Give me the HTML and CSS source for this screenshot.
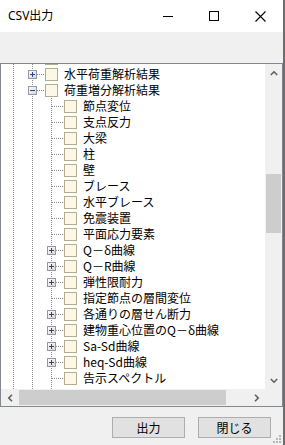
FILE: index.html
```html
<!DOCTYPE html>
<html lang="ja">
<head>
<meta charset="utf-8">
<title>CSV出力</title>
<link rel="stylesheet" href="styles.css">
</head>
<body>
<svg class="defs" width="0" height="0" aria-hidden="true">
  <defs>
    <linearGradient id="bx" x1="0" y1="0" x2="1" y2="1">
      <stop offset="0" stop-color="#ffffff"/>
      <stop offset="1" stop-color="#d4d4d4"/>
    </linearGradient>
    <symbol id="vl" viewBox="0 0 19 16"><path d="M9.5 0V16" stroke="#8c8c8c" stroke-dasharray="1 1"/></symbol>
    <symbol id="tee" viewBox="0 0 22 16"><path d="M9.5 0V16M10 8.5H22" stroke="#8c8c8c" stroke-dasharray="1 1"/></symbol>
    <symbol id="plus" viewBox="0 0 22 16"><path d="M9.5 0V16M10 8.5H22" stroke="#8c8c8c" stroke-dasharray="1 1"/><rect x="5.5" y="4.5" width="8" height="8" fill="url(#bx)" stroke="#8f9aa6"/><path d="M7 8.5H12M9.5 6V11" stroke="#24479a"/></symbol>
    <symbol id="minus" viewBox="0 0 22 16"><path d="M9.5 0V16M10 8.5H22" stroke="#8c8c8c" stroke-dasharray="1 1"/><rect x="5.5" y="4.5" width="8" height="8" fill="url(#bx)" stroke="#8f9aa6"/><path d="M7 8.5H12" stroke="#24479a"/></symbol>
  </defs>
</svg>
<div class="window">
  <div class="titlebar">
    <span class="title">CSV出力</span>
    <span class="cap"><svg width="10" height="10"><path d="M0 5.5H10" stroke="#000"/></svg></span>
    <span class="cap"><svg width="10" height="10"><rect x="0.5" y="0.5" width="9" height="9" fill="none" stroke="#000"/></svg></span>
    <span class="cap"><svg width="11" height="11"><path d="M0.5 0.5L10.5 10.5M10.5 0.5L0.5 10.5" stroke="#000" stroke-width="1.1"/></svg></span>
  </div>
  <div class="main">
    <div class="treebox">
      <div class="tree">
        <div class="tree-inner">
          <div class="row"><svg class="c19"><use href="#vl"/></svg><svg class="c22"><use href="#tee"/></svg><span class="chk"></span><span class="txt"></span></div>
          <div class="row"><svg class="c19"><use href="#vl"/></svg><svg class="c22"><use href="#plus"/></svg><span class="chk"></span><span class="txt">水平荷重解析結果</span></div>
          <div class="row"><svg class="c19"><use href="#vl"/></svg><svg class="c22"><use href="#minus"/></svg><span class="chk"></span><span class="txt">荷重増分解析結果</span></div>
          <div class="row"><svg class="c19"><use href="#vl"/></svg><svg class="c19"><use href="#vl"/></svg><svg class="c22"><use href="#tee"/></svg><span class="chk"></span><span class="txt">節点変位</span></div>
          <div class="row"><svg class="c19"><use href="#vl"/></svg><svg class="c19"><use href="#vl"/></svg><svg class="c22"><use href="#tee"/></svg><span class="chk"></span><span class="txt">支点反力</span></div>
          <div class="row"><svg class="c19"><use href="#vl"/></svg><svg class="c19"><use href="#vl"/></svg><svg class="c22"><use href="#tee"/></svg><span class="chk"></span><span class="txt">大梁</span></div>
          <div class="row"><svg class="c19"><use href="#vl"/></svg><svg class="c19"><use href="#vl"/></svg><svg class="c22"><use href="#tee"/></svg><span class="chk"></span><span class="txt">柱</span></div>
          <div class="row"><svg class="c19"><use href="#vl"/></svg><svg class="c19"><use href="#vl"/></svg><svg class="c22"><use href="#tee"/></svg><span class="chk"></span><span class="txt">壁</span></div>
          <div class="row"><svg class="c19"><use href="#vl"/></svg><svg class="c19"><use href="#vl"/></svg><svg class="c22"><use href="#tee"/></svg><span class="chk"></span><span class="txt">ブレース</span></div>
          <div class="row"><svg class="c19"><use href="#vl"/></svg><svg class="c19"><use href="#vl"/></svg><svg class="c22"><use href="#tee"/></svg><span class="chk"></span><span class="txt">水平ブレース</span></div>
          <div class="row"><svg class="c19"><use href="#vl"/></svg><svg class="c19"><use href="#vl"/></svg><svg class="c22"><use href="#tee"/></svg><span class="chk"></span><span class="txt">免震装置</span></div>
          <div class="row"><svg class="c19"><use href="#vl"/></svg><svg class="c19"><use href="#vl"/></svg><svg class="c22"><use href="#tee"/></svg><span class="chk"></span><span class="txt">平面応力要素</span></div>
          <div class="row"><svg class="c19"><use href="#vl"/></svg><svg class="c19"><use href="#vl"/></svg><svg class="c22"><use href="#plus"/></svg><span class="chk"></span><span class="txt">Q－δ曲線</span></div>
          <div class="row"><svg class="c19"><use href="#vl"/></svg><svg class="c19"><use href="#vl"/></svg><svg class="c22"><use href="#plus"/></svg><span class="chk"></span><span class="txt">Q－R曲線</span></div>
          <div class="row"><svg class="c19"><use href="#vl"/></svg><svg class="c19"><use href="#vl"/></svg><svg class="c22"><use href="#plus"/></svg><span class="chk"></span><span class="txt">弾性限耐力</span></div>
          <div class="row"><svg class="c19"><use href="#vl"/></svg><svg class="c19"><use href="#vl"/></svg><svg class="c22"><use href="#tee"/></svg><span class="chk"></span><span class="txt">指定節点の層間変位</span></div>
          <div class="row"><svg class="c19"><use href="#vl"/></svg><svg class="c19"><use href="#vl"/></svg><svg class="c22"><use href="#plus"/></svg><span class="chk"></span><span class="txt">各通りの層せん断力</span></div>
          <div class="row"><svg class="c19"><use href="#vl"/></svg><svg class="c19"><use href="#vl"/></svg><svg class="c22"><use href="#plus"/></svg><span class="chk"></span><span class="txt">建物重心位置のQ－δ曲線</span></div>
          <div class="row"><svg class="c19"><use href="#vl"/></svg><svg class="c19"><use href="#vl"/></svg><svg class="c22"><use href="#plus"/></svg><span class="chk"></span><span class="txt">Sa-Sd曲線</span></div>
          <div class="row"><svg class="c19"><use href="#vl"/></svg><svg class="c19"><use href="#vl"/></svg><svg class="c22"><use href="#plus"/></svg><span class="chk"></span><span class="txt">heq-Sd曲線</span></div>
          <div class="row"><svg class="c19"><use href="#vl"/></svg><svg class="c19"><use href="#vl"/></svg><svg class="c22"><use href="#tee"/></svg><span class="chk"></span><span class="txt">告示スペクトル</span></div>
          <div class="row"><svg class="c19"><use href="#vl"/></svg><svg class="c19"><use href="#vl"/></svg><svg class="c22"><use href="#tee"/></svg></div>
        </div>
      </div>
      <div class="vscroll">
        <span class="sbtn"><svg width="8" height="6"><path d="M0.8 5L4 1.8L7.2 5" fill="none" stroke="#606060" stroke-width="1.6"/></svg></span>
        <span class="vtrack"><span class="vthumb"></span></span>
        <span class="sbtn"><svg width="8" height="6"><path d="M0.8 1L4 4.2L7.2 1" fill="none" stroke="#606060" stroke-width="1.6"/></svg></span>
      </div>
      <div class="hscroll">
        <span class="sbtn"><svg width="6" height="8"><path d="M5 0.8L1.8 4L5 7.2" fill="none" stroke="#606060" stroke-width="1.6"/></svg></span>
        <span class="htrack"><span class="hthumb"></span></span>
        <span class="sbtn"><svg width="6" height="8"><path d="M1 0.8L4.2 4L1 7.2" fill="none" stroke="#606060" stroke-width="1.6"/></svg></span>
      </div>
      <div class="corner"></div>
    </div>
    <div class="buttons">
      <button class="btn">出力</button>
      <button class="btn">閉じる</button>
    </div>
    <svg class="grip" width="9" height="9"><g fill="#b8b8b8"><rect x="6" y="0" width="2" height="2"/><rect x="3" y="3" width="2" height="2"/><rect x="6" y="3" width="2" height="2"/><rect x="0" y="6" width="2" height="2"/><rect x="3" y="6" width="2" height="2"/><rect x="6" y="6" width="2" height="2"/></g></svg>
  </div>
</div>
<div class="edge"></div>
</body>
</html>
```

FILE: styles.css
```css
* { box-sizing: border-box; margin: 0; padding: 0; }
html, body { width: 285px; height: 445px; overflow: hidden; }
body {
  background: #f0f0f0;
  font-family: "Noto Sans CJK JP", "Noto Sans", sans-serif;
  font-size: 12px;
  color: #000;
  display: flex;
}
.defs { position: absolute; width: 0; height: 0; }
.window { width: 283px; height: 445px; display: flex; flex-direction: column; }
.edge { width: 2px; height: 445px; background: #6d6d6d; }

.titlebar { height: 32px; background: #fff; display: flex; align-items: center; }
.title {
  flex: 1;
  padding-left: 8px;
  font-family: "Noto Sans", "Noto Sans CJK JP", sans-serif;
  font-size: 12px;
  line-height: 16px;
}
.cap { width: 46px; height: 32px; display: flex; align-items: center; justify-content: center; }
.cap svg { display: block; }

.main { position: relative; flex: 1; padding-top: 31px; display: flex; flex-direction: column; }

.treebox {
  height: 344px;
  border: 1px solid #828790;
  background: #fff;
  display: grid;
  grid-template-columns: 264px 17px;
  grid-template-rows: 325px 17px;
}
.tree { overflow: hidden; padding-left: 3px; }
.tree-inner { margin-top: -14px; }
.row { height: 16px; display: flex; align-items: flex-start; white-space: nowrap; }
.row svg { display: block; height: 16px; flex: none; }
.c19 { width: 19px; }
.c22 { width: 22px; }
.chk {
  flex: none;
  width: 13px; height: 13px;
  margin-top: 2px;
  border: 1px solid #b4ac8f;
  background: #fdf8e6;
}
.txt { margin-left: 6px; line-height: 16px; font-size: 12px; }

.vscroll { background: #f0f0f0; display: flex; flex-direction: column; }
.hscroll { background: #f0f0f0; display: flex; }
.corner { background: #f0f0f0; }
.sbtn { flex: none; width: 17px; height: 17px; display: flex; align-items: center; justify-content: center; }
.sbtn svg { display: block; }
.vtrack { flex: 1; padding: 93px 1px 0; }
.vthumb { display: block; height: 59px; background: #cdcdcd; }
.htrack { flex: 1; padding: 1px 22px 1px 1px; }
.hthumb { display: block; height: 15px; background: #cdcdcd; }

.buttons { display: flex; justify-content: flex-end; gap: 13px; padding: 10px 12px 0 0; }
.btn {
  width: 73px; height: 21px;
  border: 1px solid #adadad;
  background: #e1e1e1;
  font-family: "Noto Sans CJK JP", sans-serif;
  font-size: 12px;
  line-height: 19px;
  color: #000;
}
.grip { position: absolute; right: 1px; bottom: 1px; }
```
